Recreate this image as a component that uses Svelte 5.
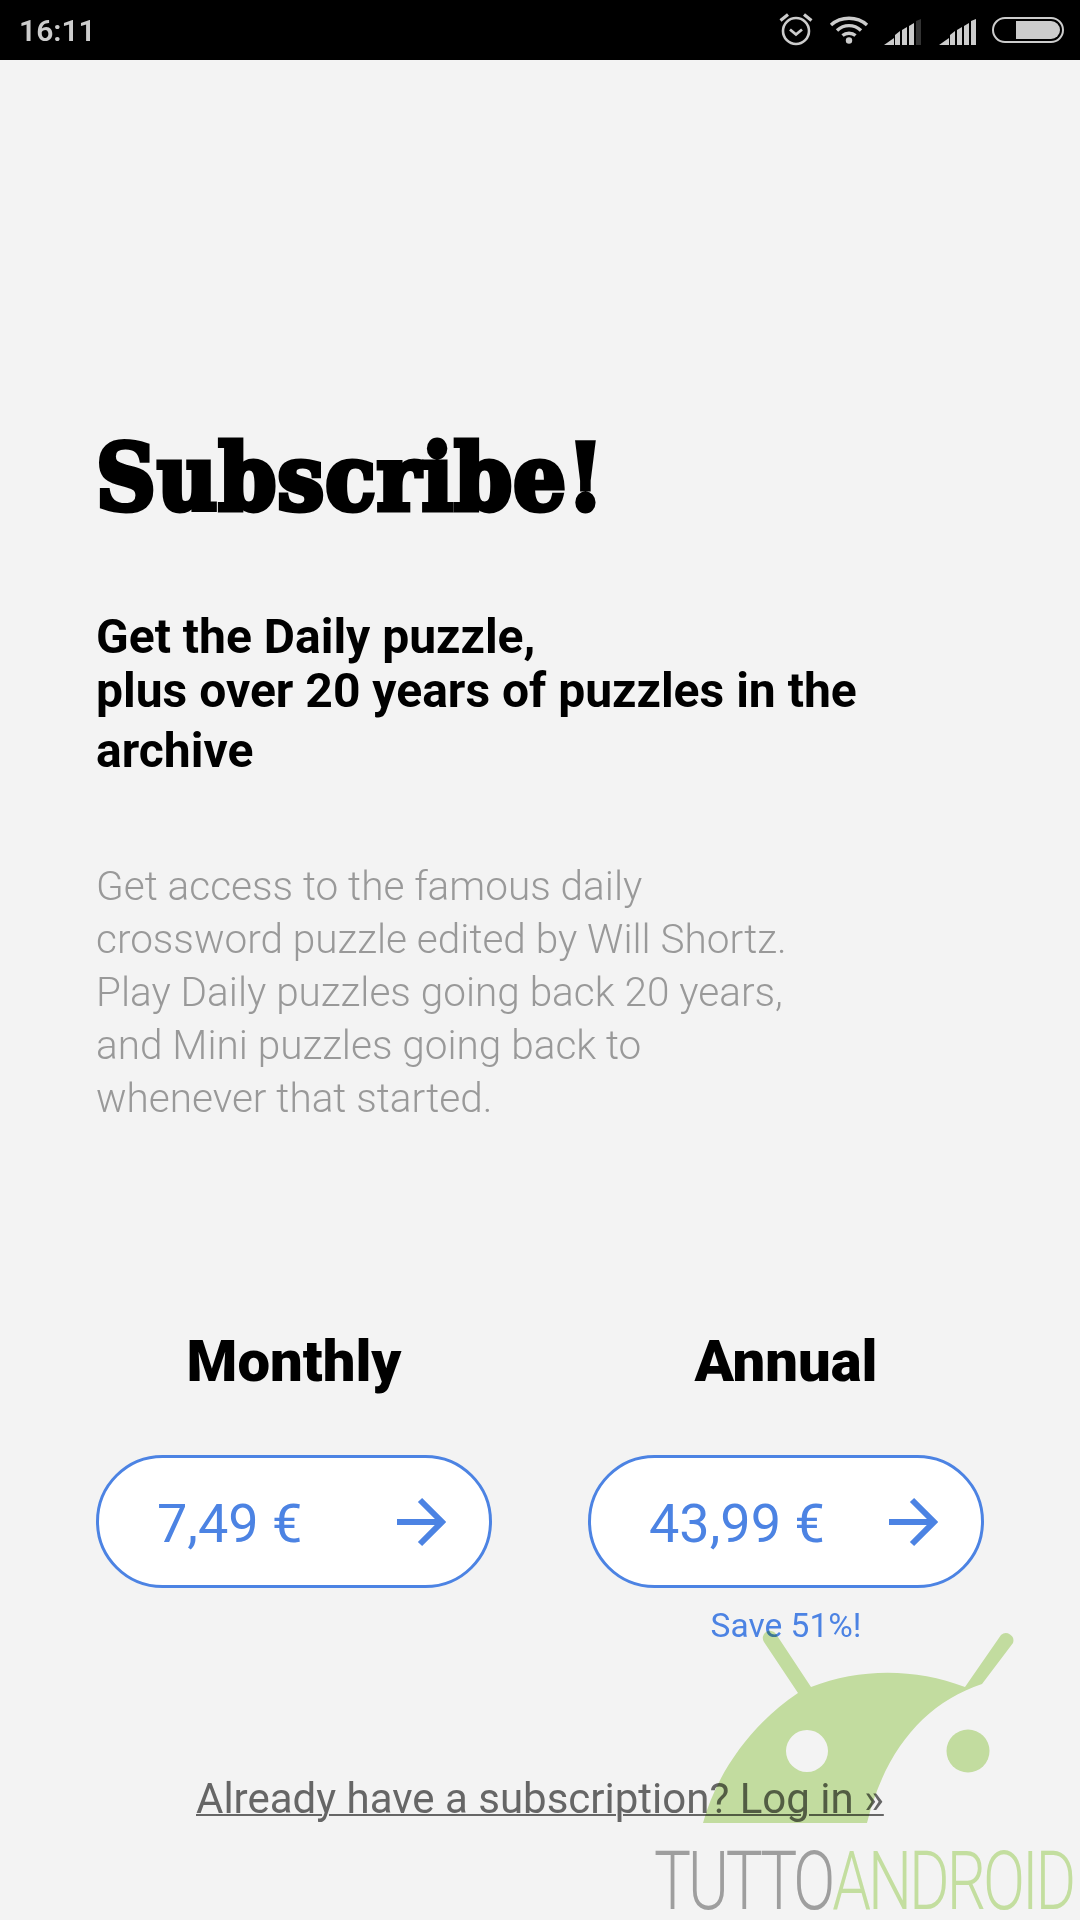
<script>
  const plans = [
    { name: 'Monthly', price: '7,49 €', note: '' },
    { name: 'Annual', price: '43,99 €', note: 'Save 51%!' }
  ];
  const bars = [
    [0, 43, 10, 36, 10, 43],
    [11, 43, 11, 33, 16, 29, 16, 43],
    [18, 43, 18, 28, 23, 25, 23, 43],
    [25, 43, 25, 24, 30, 21, 30, 43],
    [32, 43, 32, 19, 37, 17, 37, 43]
  ];
</script>

<div class="screen">
  <header class="status">
    <span class="time">16:11</span>
    <div class="icons">
      <svg class="alarm" width="34" height="34" viewBox="0 0 34 34" fill="none" stroke="#ccc">
        <circle cx="17" cy="19" r="13" stroke-width="2.6" />
        <path d="M11 17.500l6 5 6-5" stroke-width="2.8" />
        <path d="M1.500 8.500L9 2.500M32.500 8.500L25 2.500" stroke-width="3.2" />
      </svg>
      <svg class="wifi" width="40" height="30" viewBox="0 0 40 30" fill="none" stroke="#ccc" stroke-width="3.4">
        <path d="M2 10C12 1 28 1 38 10" />
        <path d="M8 15.500C15 9 25 9 32 15.500" />
        <path d="M13.500 20.500C17 17.500 23 17.500 26.500 20.500" />
        <circle cx="20" cy="25.500" r="3.200" fill="#ccc" stroke="none" />
      </svg>
      <svg class="signal" width="38" height="26" viewBox="0 17 38 26">
        {#each bars as b, i}
          <polygon points={b.join(' ')} fill={i === 4 ? '#333' : '#ccc'} />
        {/each}
      </svg>
      <svg class="signal second" width="38" height="26" viewBox="0 17 38 26">
        {#each bars as b}
          <polygon points={b.join(' ')} fill="#ccc" />
        {/each}
      </svg>
      <svg class="battery" width="72" height="26" viewBox="0 0 72 26">
        <rect x="1" y="1" width="70" height="24" rx="12" fill="none" stroke="#ccc" stroke-width="2" />
        <path d="M24 4H59a9 9 0 0 1 0 18H24z" fill="#ccc" />
      </svg>
    </div>
  </header>

  <main class="content">
    <h1>Subscribe!</h1>
    <h2><span class="first">Get the Daily puzzle,</span><span class="rest">plus over 20 years of puzzles in the archive</span></h2>
    <p>Get access to the famous daily<br />crossword puzzle edited by Will Shortz.<br />Play Daily puzzles going back 20 years,<br />and Mini puzzles going back to<br />whenever that started.</p>

    <section class="plans">
      {#each plans as plan}
        <div class="plan">
          <h3>{plan.name}</h3>
          <button>
            <span class="price">{plan.price}</span>
            <svg width="50" height="50" viewBox="0 0 50 50" fill="none" stroke="#4c83e3" stroke-width="6">
              <path d="M1 25H45M24 3l22 22-22 22" />
            </svg>
          </button>
          {#if plan.note}<div class="note">{plan.note}</div>{/if}
        </div>
      {/each}
    </section>

    <a class="login" href="#login">Already have a subscription? Log in »</a>
  </main>

  <div class="mark">
    <svg width="1080" height="1920" viewBox="0 0 1080 1920">
      <g fill="#cce7a7">
        <path fill-rule="evenodd" d="M703 1823C716 1775 750 1725 798 1693L764 1642A7 7 0 0 1 776 1634L811 1687C860 1668 915 1668 965 1687L1001 1635A7.500 7.500 0 0 1 1013 1643L982 1684C925 1703 885 1750 867 1823ZM786 1751a21 21 0 1 0 42 0a21 21 0 1 0 -42 0Z" />
        <circle cx="968" cy="1751" r="21.500" />
      </g>
    </svg>
    <div class="brand"><span class="tutto">TUTTO</span><span class="android">ANDROID</span></div>
  </div>
</div>

<style>
  :global(body) {
    margin: 0;
    background: #f3f3f3;
  }
  .screen {
    position: relative;
    width: 1080px;
    height: 1920px;
    overflow: hidden;
    background: #f3f3f3;
    font-family: Roboto, sans-serif;
  }
  .status {
    height: 60px;
    background: #000;
    display: flex;
    align-items: center;
    justify-content: space-between;
    padding: 0 16px 0 19px;
  }
  .time {
    color: #ccc;
    font: 600 30px Roboto, sans-serif;
  }
  .icons {
    display: flex;
    align-items: center;
  }
  .alarm { margin: -3px 16px 0 0; }
  .wifi { margin: -1px 15px 0 0; }
  .signal { margin-right: 17px; margin-top: 4px; }
  .signal.second { margin-right: 15px; }
  .content {
    padding: 363px 96px 0;
  }
  h1 {
    margin: 0;
    font: 900 92px/110px "DejaVu Serif Condensed", "DejaVu Serif", serif;
    -webkit-text-stroke: 5px #000;
    letter-spacing: 1.2px;
    color: #000;
  }
  h2 {
    margin: 77px 0 0;
    font: 700 48px/60px Roboto, sans-serif;
    color: #000;
  }
  h2 span { display: block; }
  .first { line-height: 54px; }
  .rest { margin-top: -3px; width: 800px; }
  p {
    margin: 79px 0 0;
    font: 300 40.500px/53px Roboto, sans-serif;
    color: #999;
  }
  .plans {
    display: flex;
    gap: 96px;
    margin-top: 202px;
  }
  .plan {
    width: 396px;
    text-align: center;
  }
  h3 {
    margin: 0 0 60px;
    font: 900 58px/68px Roboto, sans-serif;
    color: #000;
  }
  button {
    box-sizing: border-box;
    width: 100%;
    height: 133px;
    display: flex;
    align-items: center;
    justify-content: space-between;
    padding: 0 43px 0 58px;
    background: #fff;
    border: 3.500px solid #4c83e3;
    border-radius: 67px;
    color: #4c83e3;
    font: 400 54px Roboto, sans-serif;
  }
  .price { margin-top: 4px; }
  .note {
    margin-top: 18px;
    color: #4c83e3;
    font: 400 33.500px/40px Roboto, sans-serif;
  }
  .login {
    display: block;
    width: max-content;
    margin: 129px 0 0 100px;
    color: #666;
    font: 400 42px/48px Roboto, sans-serif;
    text-decoration: underline;
    text-decoration-thickness: 2px;
  }
  .mark {
    position: absolute;
    inset: 0;
    pointer-events: none;
  }
  .mark svg {
    position: absolute;
    inset: 0;
    mix-blend-mode: multiply;
  }
  .brand {
    position: absolute;
    left: 654px;
    top: 1847px;
    font: 300 81px/70px Roboto, sans-serif;
    letter-spacing: -4px;
    white-space: nowrap;
    transform: scaleX(0.766);
    transform-origin: left top;
  }
  .brand span {
    display: inline-block;
    height: 70px;
    overflow: visible;
  }
  .tutto { color: #9e9e9e; }
  .android { color: #c3de9f; }
</style>
